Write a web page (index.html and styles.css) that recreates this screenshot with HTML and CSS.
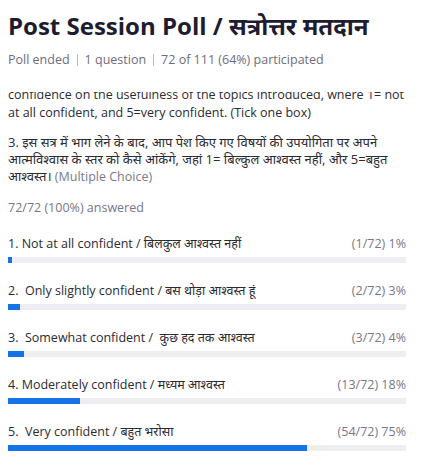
FILE: index.html
```html
<!DOCTYPE html>
<html lang="en">
<head>
<meta charset="utf-8">
<title>Post Session Poll</title>
<link rel="stylesheet" href="styles.css">
</head>
<body>
<header class="poll-header">
  <h1 class="poll-title">Post Session Poll / सत्रोत्तर मतदान</h1>
  <div class="poll-meta">
    <span>Poll ended</span><span class="sep"></span><span>1 question</span><span class="sep"></span><span>72 of 111 (64%) participated</span>
  </div>
</header>
<main class="poll-body">
  <div class="poll-scroll">
    <p class="question">2. After participating in this session, how would you rate your level of<br>confidence on the usefulness of the topics introduced, where 1= not<br>at all confident, and 5=very confident. (Tick one box)</p>
    <p class="question question-hi">3. इस सत्र में भाग लेने के बाद, आप पेश किए गए विषयों की उपयोगिता पर अपने आत्मविश्वास के स्तर को कैसे आंकेंगे, जहां 1= बिल्कुल आश्वस्त नहीं, और 5=बहुत आश्वस्त। <span class="qtype">(Multiple Choice)</span></p>
    <p class="answered">72/72 (100%) answered</p>
    <ul class="options">
      <li class="option">
        <div class="option-head"><span class="option-label">1. Not at all confident / बिलकुल आश्वस्त नहीं</span><span class="option-count">(1/72) 1%</span></div>
        <div class="track"><div class="fill" style="width:1%"></div></div>
      </li>
      <li class="option">
        <div class="option-head"><span class="option-label">2.&nbsp; Only slightly confident / बस थोड़ा आश्वस्त हूं</span><span class="option-count">(2/72) 3%</span></div>
        <div class="track"><div class="fill" style="width:3%"></div></div>
      </li>
      <li class="option">
        <div class="option-head"><span class="option-label">3.&nbsp; Somewhat confident / &nbsp;कुछ हद तक आश्वस्त</span><span class="option-count">(3/72) 4%</span></div>
        <div class="track"><div class="fill" style="width:4%"></div></div>
      </li>
      <li class="option">
        <div class="option-head"><span class="option-label">4. Moderately confident / मध्यम आश्वस्त</span><span class="option-count">(13/72) 18%</span></div>
        <div class="track"><div class="fill" style="width:18%"></div></div>
      </li>
      <li class="option">
        <div class="option-head"><span class="option-label">5.&nbsp; Very confident / बहुत भरोसा</span><span class="option-count">(54/72) 75%</span></div>
        <div class="track"><div class="fill" style="width:75%"></div></div>
      </li>
    </ul>
  </div>
</main>
</body>
</html>
```

FILE: styles.css
```css
html, body {
  margin: 0;
  padding: 0;
  background: #ffffff;
}
body {
  width: 425px;
  height: 466px;
  overflow: hidden;
  font-family: "Open Sans", "Noto Sans", "Noto Sans Devanagari", "Lohit Devanagari", sans-serif;
  color: #252423;
}
.poll-header {
  padding: 10px 8px 0 8px;
  height: 92px;
  box-sizing: border-box;
}
.poll-title {
  margin: 0;
  font-size: 24px;
  line-height: 32px;
  font-weight: 700;
  color: #1d1c30;
  white-space: nowrap;
}
.poll-meta {
  margin-top: 10px;
  font-size: 12.5px;
  line-height: 16px;
  color: #6e6d80;
  display: flex;
  align-items: center;
  white-space: nowrap;
}
.sep {
  display: inline-block;
  width: 1px;
  height: 12px;
  background: #b8b7c4;
  margin: 0 7px;
}
.poll-body {
  height: 374px;
  overflow: hidden;
  padding: 0 8px;
}
.poll-scroll {
  margin-top: -24px;
}
.question {
  margin: 0 0 12px 0;
  font-size: 12.5px;
  line-height: 18px;
  color: #2b2a33;
  white-space: nowrap;
}
.question-hi {
  white-space: normal;
  font-size: 13px;
  line-height: 17px;
  padding-right: 4px;
  margin-bottom: 14px;
}
.qtype {
  color: #7a7989;
  font-size: 12.5px;
}
.answered {
  margin: 0;
  font-size: 12.5px;
  line-height: 18px;
  color: #77768a;
}
.options {
  list-style: none;
  margin: 18px 0 0 0;
  padding: 0;
  display: flex;
  flex-direction: column;
  gap: 19px;
  width: 398px;
}
.option-head {
  display: flex;
  justify-content: space-between;
  align-items: baseline;
  line-height: 18px;
  white-space: nowrap;
}
.option-label {
  color: #2b2a33;
  font-size: 12.5px;
}
.option-count {
  color: #77768a;
  font-size: 12.5px;
}
.track {
  margin-top: 4px;
  height: 6px;
  background: #ededf2;
}
.fill {
  height: 100%;
  background: #1473e6;
}
```
